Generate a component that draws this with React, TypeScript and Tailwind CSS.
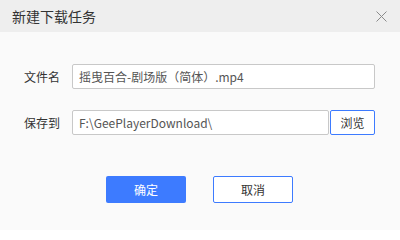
import React from 'react'

const font = { fontFamily: '"Noto Sans CJK SC", "Microsoft YaHei", sans-serif' }

export default function App() {
  return (
    <div className="w-[400px] h-[230px] bg-[#fafafa] flex flex-col" style={font}>
      {/* Title bar */}
      <div className="h-8 bg-[#eeeeee] flex items-center justify-between pl-3 pr-3">
        <span className="text-[14px] text-[#333333] leading-none">新建下载任务</span>
        <svg width="11" height="11" viewBox="0 0 11 11" className="mr-[1px]">
          <path d="M0.5 0.5 L10.5 10.5 M10.5 0.5 L0.5 10.5" stroke="#8a8a8a" strokeWidth="1" />
        </svg>
      </div>

      {/* Form */}
      <div className="flex flex-col pt-8 pl-6 pr-[25px] gap-[21px]">
        <div className="flex items-center h-[25px]">
          <label className="w-12 text-[12px] text-[#333333]">文件名</label>
          <div className="flex-1 h-full flex items-center bg-white border border-[#c8c8c8] rounded-[2px] px-[6px] text-[12px] text-[#555555]">
            摇曳百合-剧场版（简体）.mp4
          </div>
        </div>
        <div className="flex items-center h-[25px]">
          <label className="w-12 text-[12px] text-[#333333]">保存到</label>
          <div className="flex-1 h-full flex items-center bg-white border border-[#c8c8c8] rounded-[2px] px-[6px] text-[12px] text-[#555555]">
            F:\GeePlayerDownload\
          </div>
          <button className="ml-[1px] w-[45px] h-full bg-white border border-[#3d7bff] rounded-[2px] text-[12px] text-[#333333]">
            浏览
          </button>
        </div>
      </div>

      {/* Actions */}
      <div className="flex justify-center gap-[27px] mt-[41px] pr-[1px]">
        <button className="w-20 h-[27px] bg-[#3d7bff] rounded-[2px] text-[12px] text-white">确定</button>
        <button className="w-20 h-[27px] bg-white border border-[#3d7bff] rounded-[2px] text-[12px] text-[#333333]">取消</button>
      </div>
    </div>
  )
}
